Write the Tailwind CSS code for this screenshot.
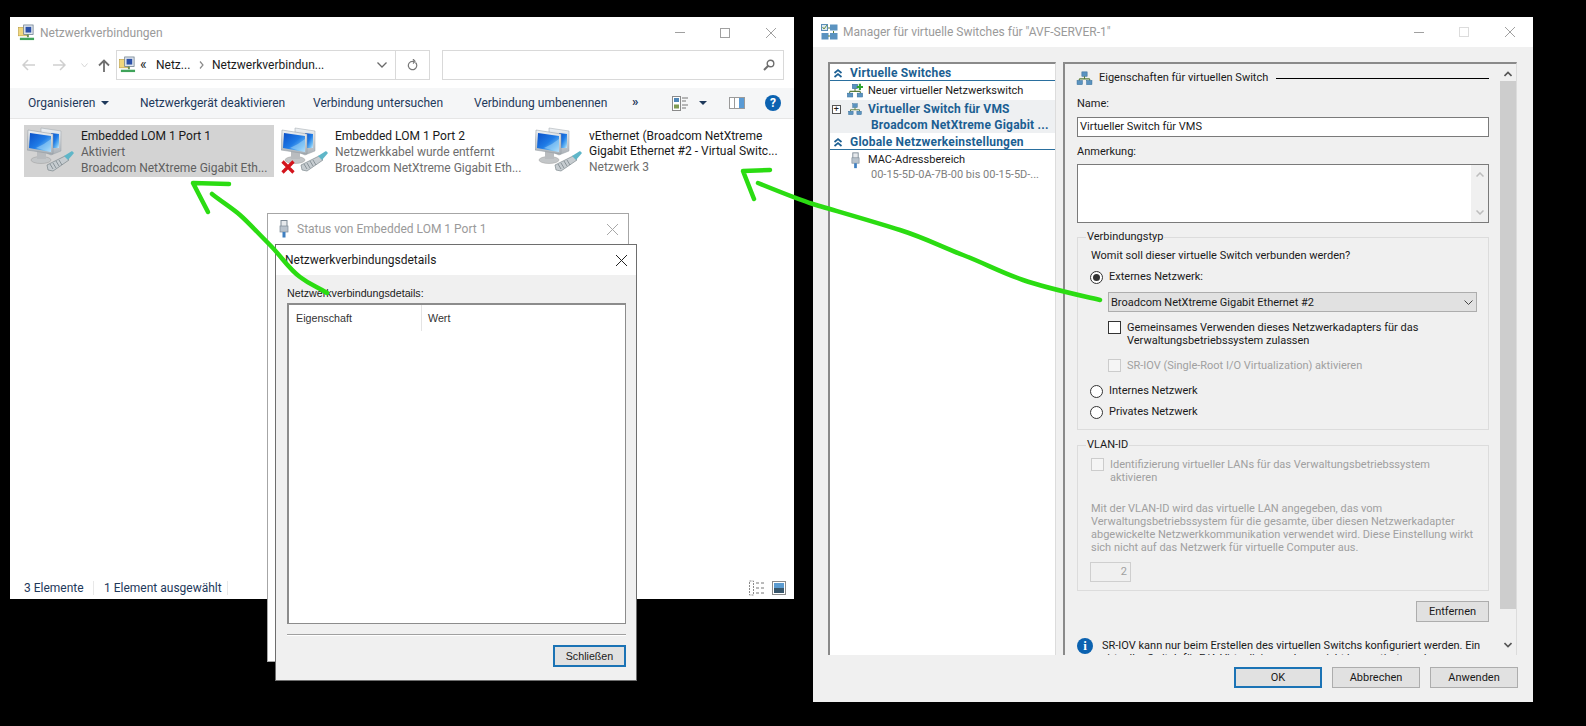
<!DOCTYPE html>
<html lang="de">
<head>
<meta charset="UTF-8">
<title>Netzwerkverbindungen</title>
<script src="https://cdn.jsdelivr.net/npm/@tailwindcss/browser@4"></script>
</head>
<body class="bg-black">
<svg class="absolute w-0 h-0">
  <defs>
    <linearGradient id="scr" x1="0" y1="0" x2="1" y2="1"><stop offset="0" stop-color="#0a4fc8"/><stop offset="0.5" stop-color="#1f7be6"/><stop offset="0.8" stop-color="#6fbdf3"/><stop offset="1" stop-color="#cfeafc"/></linearGradient>
    <linearGradient id="sil" x1="0" y1="0" x2="0" y2="1"><stop offset="0" stop-color="#eef1f4"/><stop offset="1" stop-color="#a9b0b6"/></linearGradient>
    <symbol id="pc" viewBox="0 0 48 48">
      <polygon points="14,1 34,4 34,24 24,28 14,24" fill="url(#sil)" stroke="#9aa2a8" stroke-width=".5"/>
      <polygon points="24,6 32,7 32,21 24,21" fill="url(#scr)"/>
      <ellipse cx="14" cy="33" rx="10" ry="3.5" fill="#c3c6c8" stroke="#9a9a9a" stroke-width=".5"/>
      <rect x="10" y="24" width="9" height="8" fill="#b9bcbf"/>
      <polygon points="1,3 26,7 26,27 0,23" fill="url(#sil)" stroke="#8f979d" stroke-width=".5"/>
      <polygon points="3,6 24,9 24,25 2,21" fill="url(#scr)"/>
      <path d="M9 21 Q18 17 24 12 L24 25Z" fill="#9fd4f7" opacity=".55"/>
      <polygon points="20,38 38,29 42,33 26,44 21,43" fill="#c6ccd0" stroke="#6e7a80" stroke-width=".6"/>
      <path d="M23 37l3 5M26 36l3 5M29 34l3 5M32 33l3 5" stroke="#6e7a80" stroke-width=".7"/>
      <polygon points="37,29 45,24 47,26 41,33" fill="#5fb6c8"/>
    </symbol>
    <symbol id="netfolder" viewBox="0 0 18 18">
      <rect x="0.500" y="3" width="9" height="9" fill="#f1d77c" stroke="#b79a3c" stroke-width=".6"/>
      <rect x="6" y="0.500" width="10" height="10" fill="#dfe6ee" stroke="#6a7a8a" stroke-width=".8"/>
      <rect x="8" y="2.500" width="6" height="6" fill="#2b50a8"/>
      <rect x="9.500" y="10.500" width="2" height="3" fill="#6b8f55"/>
      <rect x="2" y="14" width="15" height="2.500" fill="#3fa35a"/>
    </symbol>
    <symbol id="switch" viewBox="0 0 18 16">
      <rect x="6" y="1" width="6" height="5" fill="#5b93c0" stroke="#2f6a98" stroke-width=".6"/>
      <path d="M9 6v3M3 9h12M3 9v2M15 9v2" stroke="#5a7c3a" stroke-width="1.200" fill="none"/>
      <rect x="0.500" y="11" width="6" height="4.500" fill="#5b93c0" stroke="#2f6a98" stroke-width=".6"/>
      <rect x="11.500" y="11" width="6" height="4.500" fill="#5b93c0" stroke="#2f6a98" stroke-width=".6"/>
    </symbol>
    <symbol id="plug" viewBox="0 0 10 18">
      <rect x="2" y="0.500" width="6" height="8" fill="#e6e9ec" stroke="#7d8a96"/>
      <rect x="1" y="6" width="8" height="6" fill="#b8c2cc" stroke="#7d8a96" stroke-width=".7"/>
      <rect x="3.500" y="12" width="3" height="5.500" fill="#3f7fc0"/>
    </symbol>
    <symbol id="dblup" viewBox="0 0 10 10">
      <path d="M1.500 5L5 2l3.500 3M1.500 9L5 6l3.500 3" fill="none" stroke="#1c5f92" stroke-width="1.700"/>
    </symbol>
  </defs>
</svg>

<div class="relative w-[1586px] h-[726px] overflow-hidden bg-black font-['Roboto',sans-serif] text-[12px] leading-[16px]">

  <!-- Netzwerkverbindungen -->
  <div class="absolute left-[10px] top-[17px] w-[784px] h-[582px] bg-white flex flex-col">
    <div class="h-[30px] flex items-center pl-[8px] pt-[1px] text-[#9a9a9a]">
      <svg class="w-[17px] h-[18px]"><use href="#netfolder"/></svg>
      <span class="ml-[5px]">Netzwerkverbindungen</span>
      <div class="ml-auto flex items-center">
        <div class="w-[10px] h-px bg-[#a0a0a0]"></div>
        <div class="w-[10px] h-[10px] border border-[#a0a0a0] ml-[35px]"></div>
        <svg class="w-[10px] h-[10px] ml-[36px] mr-[18px]" viewBox="0 0 10 10"><path d="M0 0l10 10M10 0L0 10" stroke="#a0a0a0"/></svg>
      </div>
    </div>
    <div class="h-[41px] flex items-center pt-[1px] pb-[6px]">
      <svg class="w-[13px] h-[12px] ml-[12px]" viewBox="0 0 13 12"><path d="M6 1L1 6l5 5M1 6h12" fill="none" stroke="#cfcfcf" stroke-width="1.500"/></svg>
      <svg class="w-[13px] h-[12px] ml-[18px]" viewBox="0 0 13 12"><path d="M7 1l5 5-5 5M12 6H0" fill="none" stroke="#cfcfcf" stroke-width="1.500"/></svg>
      <svg class="w-[7px] h-[5px] ml-[15px]" viewBox="0 0 7 5"><path d="M.5.5L3.500 4 6.500.5" fill="none" stroke="#d5d5d5"/></svg>
      <svg class="w-[12px] h-[13px] ml-[10px]" viewBox="0 0 12 13"><path d="M6 13V1.500M1 6.500l5-5 5 5" fill="none" stroke="#6e6e6e" stroke-width="1.800"/></svg>
      <div class="ml-[6px] w-[314px] h-[30px] border border-[#d9d9d9] flex items-center text-[#1a1a1a]">
        <svg class="w-[17px] h-[18px] ml-[2px]"><use href="#netfolder"/></svg>
        <span class="ml-[4px] w-[16px] -mt-[3px] text-[14px]">«</span>
        <span class="w-[43px] whitespace-nowrap">Netz...</span>
        <svg class="w-[5px] h-[8px]" viewBox="0 0 5 8"><path d="M1 .5L4 4 1 7.500" fill="none" stroke="#8a8a8a" stroke-width="1.200"/></svg>
        <span class="ml-[8px] whitespace-nowrap">Netzwerkverbindun...</span>
        <svg class="w-[10px] h-[6px] ml-auto mr-[8px]" viewBox="0 0 10 6"><path d="M.5.5L5 5 9.500.5" fill="none" stroke="#6a6a6a" stroke-width="1.300"/></svg>
        <div class="w-px h-full bg-[#d9d9d9]"></div>
        <div class="w-[33px] flex justify-center">
          <svg class="w-[11px] h-[12px]" viewBox="0 0 11 12"><path d="M8.500 3.500a4.200 4.200 0 1 1-3-1.200H7M6 0l2 2.300L6 4.500" fill="none" stroke="#777" stroke-width="1.200"/></svg>
        </div>
      </div>
      <div class="ml-[12px] w-[342px] h-[30px] border border-[#d9d9d9] flex items-center justify-end pr-[8px]">
        <svg class="w-[12px] h-[12px]" viewBox="0 0 12 12"><circle cx="7.500" cy="4.500" r="3.300" fill="none" stroke="#6e6e6e" stroke-width="1.400"/><path d="M5 7L1 11" stroke="#6e6e6e" stroke-width="2"/></svg>
      </div>
    </div>
    <div class="h-[31px] bg-[#f5f6f7] border-b border-[#e6e6e6] flex items-center text-[#1e395b] whitespace-nowrap">
      <span class="ml-[18px] w-[69px]">Organisieren</span>
      <span class="ml-[4px] w-0 h-0 border-x-[4px] border-x-transparent border-t-[4px] border-t-[#1e395b]"></span>
      <span class="ml-[31px] w-[143px]">Netzwerkgerät deaktivieren</span>
      <span class="ml-[30px] w-[130px]">Verbindung untersuchen</span>
      <span class="ml-[31px] w-[135px]">Verbindung umbenennen</span>
      <span class="ml-[23px] w-[9px] text-[13px] font-bold -mt-[3px]">»</span>
      <svg class="w-[17px] h-[15px] ml-[31px]" viewBox="0 0 17 15"><rect x=".5" y=".5" width="8" height="14" fill="#fff" stroke="#8a8a8a"/><rect x="2" y="2" width="5" height="4" fill="#4f87b8"/><rect x="2" y="8.500" width="5" height="4" fill="#7f9a52"/><path d="M10 2h6M10 5h4M10 9h6M10 12h4" stroke="#777"/></svg>
      <span class="ml-[10px] w-0 h-0 border-x-[4px] border-x-transparent border-t-[4px] border-t-[#1e395b]"></span>
      <svg class="w-[16px] h-[12px] ml-[22px]" viewBox="0 0 16 12"><rect x=".5" y=".5" width="15" height="11" fill="#fff" stroke="#9a9a9a"/><rect x="10" y="1" width="5" height="10" fill="#5a9bd5"/><path d="M5.500 1v10" stroke="#9a9a9a"/></svg>
      <div class="ml-[20px] w-[16px] h-[16px] rounded-full bg-[#0b62b0] text-white flex items-center justify-center font-bold text-[12px]">?</div>
    </div>
    <div class="flex-1 flex gap-[4px] pl-[14px] pt-[6px] text-[#6d6d6d]">
      <div class="w-[250px] h-[52px] bg-[#d3d3d3] flex">
        <svg class="w-[48px] h-[48px] ml-[3px] mt-[2px] shrink-0"><use href="#pc"/></svg>
        <div class="ml-[6px] whitespace-nowrap text-[#5f5f5f]">
          <div class="text-[#1a1a1a] h-[16px] mt-[3px]">Embedded LOM 1 Port 1</div>
          <div class="h-[16px]">Aktiviert</div>
          <div class="h-[16px]">Broadcom NetXtreme Gigabit Eth...</div>
        </div>
      </div>
      <div class="w-[250px] h-[52px] flex relative">
        <svg class="w-[48px] h-[48px] ml-[3px] mt-[2px] shrink-0"><use href="#pc"/></svg>
        <svg class="absolute left-[3px] top-[35px] w-[14px] h-[14px]" viewBox="0 0 14 14"><path d="M1.500 1.500l11 11M12.500 1.500l-11 11" stroke="#d3141c" stroke-width="3.200"/></svg>
        <div class="ml-[6px] whitespace-nowrap">
          <div class="text-[#1a1a1a] h-[16px] mt-[3px]">Embedded LOM 1 Port 2</div>
          <div class="h-[16px]">Netzwerkkabel wurde entfernt</div>
          <div class="h-[16px]">Broadcom NetXtreme Gigabit Eth...</div>
        </div>
      </div>
      <div class="w-[250px] h-[52px] flex">
        <svg class="w-[48px] h-[48px] ml-[3px] mt-[2px] shrink-0"><use href="#pc"/></svg>
        <div class="ml-[6px] whitespace-nowrap">
          <div class="text-[#1a1a1a] h-[15px] mt-[3px]">vEthernet (Broadcom NetXtreme</div>
          <div class="text-[#1a1a1a] h-[16px]">Gigabit Ethernet #2 - Virtual Switc...</div>
          <div class="h-[16px]">Netzwerk 3</div>
        </div>
      </div>
    </div>
    <div class="h-[22px] flex items-center pl-[14px] pb-[1px] text-[#1e395b] whitespace-nowrap">
      <span class="w-[69px]">3 Elemente</span>
      <span class="w-px h-[14px] bg-[#e8e8e8]"></span>
      <span class="ml-[10px] w-[115px]">1 Element ausgewählt</span>
      <span class="w-px h-[14px] bg-[#e8e8e8] ml-[8px]"></span>
      <svg class="ml-auto w-[16px] h-[16px]" viewBox="0 0 16 16"><rect x=".5" y="1" width="4" height="14" fill="none" stroke="#8a8a8a" stroke-dasharray="2 1"/><path d="M7 3h3M12 3h3M7 8h3M12 8h3M7 13h3M12 13h3" stroke="#777"/></svg>
      <svg class="ml-[7px] mr-[8px] w-[14px] h-[14px]" viewBox="0 0 14 14"><rect x=".5" y=".5" width="13" height="13" fill="#fff" stroke="#8a8a8a"/><rect x="2" y="2" width="10" height="5" fill="#5b9bd0"/><rect x="2" y="7" width="10" height="5" fill="#37566b"/></svg>
    </div>
  </div>

  <!-- Status von Embedded LOM 1 Port 1 -->
  <div class="absolute left-[267px] top-[213px] w-[362px] h-[449px] bg-white border border-[#a6a6a6]">
    <div class="h-[30px] flex items-center pl-[11px] text-[#9a9a9a]">
      <svg class="w-[10px] h-[18px]"><use href="#plug"/></svg>
      <span class="ml-[8px]">Status von Embedded LOM 1 Port 1</span>
      <svg class="ml-auto mr-[10px] w-[11px] h-[11px]" viewBox="0 0 11 11"><path d="M0 0l11 11M11 0L0 11" stroke="#a8a8a8"/></svg>
    </div>
  </div>

  <!-- Netzwerkverbindungsdetails -->
  <div class="absolute left-[275px] top-[244px] w-[362px] h-[437px] bg-[#f0f0f0] border border-[#6e6e6e] flex flex-col font-['Liberation_Sans',sans-serif] text-[10.7px] text-[#1a1a1a]">
    <div class="h-[30px] bg-white flex items-center pl-[9px] shrink-0">
      <span class="font-['Roboto',sans-serif] text-[12px]">Netzwerkverbindungsdetails</span>
      <svg class="ml-auto mr-[9px] w-[11px] h-[11px]" viewBox="0 0 11 11"><path d="M0 0l11 11M11 0L0 11" stroke="#222"/></svg>
    </div>
    <div class="h-[28px] pl-[11px] pt-[10px]">Netzwerkverbindungsdetails:</div>
    <div class="ml-[11px] w-[339px] h-[321px] bg-white border-2 border-[#8c8c8c] border-b border-r flex text-[#333]">
      <div class="w-[133px] h-[26px] pl-[7px] pt-[5px] border-r border-[#e4e4e4]">Eigenschaft</div>
      <div class="pl-[6px] pt-[5px]">Wert</div>
    </div>
    <div class="ml-[11px] mt-[10px] w-[339px] h-[2px] bg-[#a0a0a0] border-b border-white"></div>
    <div class="flex justify-end pr-[10px] mt-[9px]">
      <button class="w-[73px] h-[22px] bg-[#e1e1e1] border-2 border-[#1b73b5] leading-none">Schließen</button>
    </div>
  </div>

  <!-- Manager fuer virtuelle Switches -->
  <div class="absolute left-[813px] top-[17px] w-[720px] h-[685px] bg-[#f0f0f0] flex flex-col text-[11px] text-[#1a1a1a]">
    <div class="h-[30px] bg-white flex items-center pl-[8px] shrink-0 text-[12px] text-[#9a9a9a]">
      <svg class="w-[17px] h-[16px]" viewBox="0 0 17 16"><rect x=".5" y=".5" width="6" height="6" fill="#dbe8f3" stroke="#5b8fb8"/><path d="M1.500 3l1.500 2 3-4" fill="none" stroke="#6b8f3f"/><rect x="9" y=".5" width="7.500" height="6" fill="#5b93c0"/><rect x=".5" y="9" width="7" height="6.500" fill="#5b93c0"/><rect x="9" y="9" width="7.500" height="6.500" fill="#5b93c0"/><path d="M7 4h2M7 12h2M12.500 7v2" stroke="#5a7c3a"/></svg>
      <span class="ml-[5px]">Manager für virtuelle Switches für "AVF-SERVER-1"</span>
      <div class="ml-auto flex items-center">
        <div class="w-[10px] h-px bg-[#a0a0a0]"></div>
        <div class="w-[10px] h-[10px] border border-[#dcdcdc] ml-[35px]"></div>
        <svg class="w-[10px] h-[10px] ml-[36px] mr-[18px]" viewBox="0 0 10 10"><path d="M0 0l10 10M10 0L0 10" stroke="#a0a0a0"/></svg>
      </div>
    </div>
    <div class="h-[593px] mt-[15px] ml-[15px] flex shrink-0">
      <!-- linke Liste -->
      <div class="w-[228px] h-full bg-white border-t-2 border-l-2 border-[#8a8a8a] border-r border-r-[#dcdcdc] whitespace-nowrap">
        <div class="h-[16px] mt-[1px] border-b border-[#2a6f9e] flex items-center pl-[3px] font-bold text-[12px] tracking-[0.2px] text-[#1c5f92]">
          <svg class="w-[10px] h-[10px]"><use href="#dblup"/></svg>
          <span class="ml-[7px]">Virtuelle Switches</span>
        </div>
        <div class="h-[19px] flex items-center pl-[17px]">
          <svg class="w-[16px] h-[15px]" viewBox="0 0 18 16"><use href="#switch"/><path d="M11 4h7M14.500 .5v7" stroke="#2fa32f" stroke-width="2.400"/></svg>
          <span class="ml-[5px]">Neuer virtueller Netzwerkswitch</span>
        </div>
        <div class="h-[33px] bg-[#eef0f2] font-bold text-[12px] tracking-[0.2px] text-[#1c5f92]">
          <div class="h-[16px] flex items-center pl-[2px] pt-[2px]">
            <div class="w-[9px] h-[9px] border border-[#555] bg-white flex items-center justify-center text-[#222] text-[9px] leading-none font-normal">+</div>
            <svg class="w-[16px] h-[12px] ml-[6px]"><use href="#switch"/></svg>
            <span class="ml-[5px]">Virtueller Switch für VMS</span>
          </div>
          <div class="pl-[41px] h-[15px] mt-[1px]">Broadcom NetXtreme Gigabit ...</div>
        </div>
        <div class="h-[16px] mt-[1px] border-b border-[#2a6f9e] flex items-center pl-[3px] font-bold text-[12px] tracking-[0.2px] text-[#1c5f92]">
          <svg class="w-[10px] h-[10px]"><use href="#dblup"/></svg>
          <span class="ml-[7px]">Globale Netzwerkeinstellungen</span>
        </div>
        <div class="flex pl-[21px] pt-[2px]">
          <svg class="w-[9px] h-[17px]"><use href="#plug"/></svg>
          <div class="ml-[8px]">
            <div class="h-[15px]">MAC-Adressbereich</div>
            <div class="pl-[3px] text-[#808080]">00-15-5D-0A-7B-00 bis 00-15-5D-...</div>
          </div>
        </div>
      </div>
      <!-- rechte Eigenschaften -->
      <div class="ml-[7px] w-[454px] h-full border-t-2 border-l-2 border-[#8a8a8a] border-r border-r-[#dcdcdc] flex overflow-hidden">
        <div class="w-[435px] pl-[12px] pr-[11px] overflow-hidden">
          <div class="h-[24px] pt-[4px] flex items-center">
            <svg class="w-[17px] h-[14px] -ml-[1px]"><use href="#switch"/></svg>
            <span class="ml-[6px] whitespace-nowrap">Eigenschaften für virtuellen Switch</span>
            <div class="ml-[8px] flex-1 h-px bg-black"></div>
          </div>
          <div class="h-[16px] mt-[8px]">Name:</div>
          <div class="mt-[5px] h-[20px] bg-white border border-[#7a7a7a] pl-[2px] leading-[18px]">Virtueller Switch für VMS</div>
          <div class="h-[16px] mt-[7px]">Anmerkung:</div>
          <div class="mt-[4px] h-[59px] bg-white border border-[#7a7a7a] flex justify-end">
            <div class="w-[17px] h-full bg-[#f0f0f0] flex flex-col items-center justify-between py-[7px]">
              <svg class="w-[8px] h-[5px]" viewBox="0 0 8 5"><path d="M.5 4.500L4 1l3.500 3.500" fill="none" stroke="#bdbdbd" stroke-width="1.500"/></svg>
              <svg class="w-[8px] h-[5px]" viewBox="0 0 8 5"><path d="M.5.5L4 4 7.500.5" fill="none" stroke="#bdbdbd" stroke-width="1.500"/></svg>
            </div>
          </div>
          <!-- Verbindungstyp -->
          <div class="relative mt-[14px] h-[193px] border border-[#dcdcdc] pl-[13px]">
            <span class="absolute -top-[9px] left-[8px] bg-[#f0f0f0] px-px">Verbindungstyp</span>
            <div class="h-[16px] mt-[10px]">Womit soll dieser virtuelle Switch verbunden werden?</div>
            <div class="h-[16px] mt-[5px] flex items-center -ml-[1px]">
              <span class="w-[13px] h-[13px] rounded-full border border-[#333] bg-white flex items-center justify-center"><span class="w-[7px] h-[7px] rounded-full bg-[#333]"></span></span>
              <span class="ml-[6px]">Externes Netzwerk:</span>
            </div>
            <div class="ml-[17px] mt-[7px] w-[369px] h-[20px] bg-[#e1e1e1] border border-[#adadad] flex items-center pl-[2px] pt-px justify-between">
              <span>Broadcom NetXtreme Gigabit Ethernet #2</span>
              <svg class="w-[9px] h-[5px] mr-[3px]" viewBox="0 0 9 5"><path d="M.5.5l4 4 4-4" fill="none" stroke="#444"/></svg>
            </div>
            <div class="ml-[17px] mt-[9px] flex">
              <span class="w-[13px] h-[13px] border border-[#333] bg-white shrink-0"></span>
              <div class="ml-[6px] leading-[13px]">Gemeinsames Verwenden dieses Netzwerkadapters für das<br>Verwaltungsbetriebssystem zulassen</div>
            </div>
            <div class="ml-[17px] mt-[12px] flex items-center text-[#a0a0a0]">
              <span class="w-[13px] h-[13px] border border-[#cccccc] bg-[#f5f5f5] shrink-0"></span>
              <div class="ml-[6px] leading-[13px]">SR-IOV (Single-Root I/O Virtualization) aktivieren</div>
            </div>
            <div class="h-[16px] mt-[11px] flex items-center -ml-[1px]">
              <span class="w-[13px] h-[13px] rounded-full border border-[#333] bg-white"></span>
              <span class="ml-[6px]">Internes Netzwerk</span>
            </div>
            <div class="h-[16px] mt-[5px] flex items-center -ml-[1px]">
              <span class="w-[13px] h-[13px] rounded-full border border-[#333] bg-white"></span>
              <span class="ml-[6px]">Privates Netzwerk</span>
            </div>
          </div>
          <!-- VLAN-ID -->
          <div class="relative mt-[15px] h-[146px] border border-[#dcdcdc] pl-[13px] text-[#a0a0a0]">
            <span class="absolute -top-[9px] left-[8px] bg-[#f0f0f0] px-px text-[#1a1a1a]">VLAN-ID</span>
            <div class="mt-[12px] flex">
              <span class="w-[13px] h-[13px] border border-[#cccccc] bg-[#f5f5f5] shrink-0"></span>
              <div class="ml-[6px] leading-[13px]">Identifizierung virtueller LANs für das Verwaltungsbetriebssystem<br>aktivieren</div>
            </div>
            <div class="mt-[18px] leading-[13px] whitespace-nowrap">Mit der VLAN-ID wird das virtuelle LAN angegeben, das vom<br>Verwaltungsbetriebssystem für die gesamte, über diesen Netzwerkadapter<br>abgewickelte Netzwerkkommunikation verwendet wird. Diese Einstellung wirkt<br>sich nicht auf das Netzwerk für virtuelle Computer aus.</div>
            <div class="mt-[8px] -ml-[1px] w-[41px] h-[20px] border border-[#cfcfcf] text-right pr-[3px] leading-[18px]">2</div>
          </div>
          <div class="flex justify-end mt-[10px]">
            <button class="w-[73px] h-[21px] bg-[#e1e1e1] border border-[#adadad] leading-none">Entfernen</button>
          </div>
          <div class="flex mt-[16px]">
            <div class="w-[16px] h-[16px] rounded-full bg-[#0b62b0] text-white flex items-center justify-center font-bold font-['Liberation_Serif',serif] text-[13px] shrink-0">i</div>
            <div class="ml-[9px] whitespace-nowrap leading-[13px] mt-[1px]">SR-IOV kann nur beim Erstellen des virtuellen Switchs konfiguriert werden. Ein<br>virtueller Switch für E/A-Virtualisierung kann nicht konvertiert werden.</div>
          </div>
        </div>
        <div class="w-[16px] flex flex-col items-center bg-[#f0f0f0]">
          <svg class="w-[8px] h-[6px] mt-[7px]" viewBox="0 0 8 6"><path d="M.5 5L4 1.500 7.500 5" fill="none" stroke="#555" stroke-width="1.600"/></svg>
          <div class="w-full h-[528px] mt-[4px] bg-[#cdcdcd]"></div>
          <svg class="w-[8px] h-[6px] mt-[33px]" viewBox="0 0 8 6"><path d="M.5 1L4 4.500 7.500 1" fill="none" stroke="#555" stroke-width="1.600"/></svg>
        </div>
      </div>
    </div>
    <div class="flex justify-end gap-[10px] pr-[15px] mt-[12px]">
      <button class="w-[88px] h-[21px] bg-[#e1e1e1] border-2 border-[#1b73b5] leading-none">OK</button>
      <button class="w-[88px] h-[21px] bg-[#e1e1e1] border border-[#adadad] leading-none">Abbrechen</button>
      <button class="w-[88px] h-[21px] bg-[#e1e1e1] border border-[#adadad] leading-none">Anwenden</button>
    </div>
  </div>

  <!-- gruene Pfeile -->
  <svg class="absolute left-0 top-0 w-[1586px] h-[726px] pointer-events-none" viewBox="0 0 1586 726" fill="none" stroke="#2bdc12" stroke-width="4.500" stroke-linecap="round" stroke-linejoin="round">
    <path d="M229 184L193 183L208 212"/>
    <path d="M212 194C222 202 232 208 240 215S258 233 270 245S288 268 300 277S316 286 327 293"/>
    <path d="M770 170L743 171L754 199"/>
    <path d="M758 183C785 194 800 200 813 204S875 222 900 230S940 246 963 255S1000 272 1023 280S1070 293 1100 300"/>
  </svg>
</div>
</body>
</html>
